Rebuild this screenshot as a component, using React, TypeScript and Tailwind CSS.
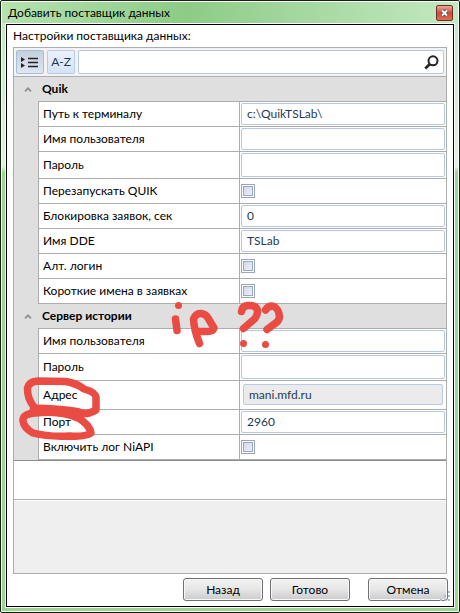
import React from "react";

type Field = {
  id: string;
  label: string;
  kind: "text" | "password" | "check" | "readonly";
  value?: string;
  height: string;
};

const quikFields: Field[] = [
  { id: "path", label: "Путь к терминалу", kind: "text", value: "c:\\QuikTSLab\\", height: "h-[25px]" },
  { id: "user", label: "Имя пользователя", kind: "text", height: "h-[25px]" },
  { id: "pass", label: "Пароль", kind: "password", height: "h-[27px]" },
  { id: "restart", label: "Перезапускать QUIK", kind: "check", height: "h-[25px]" },
  { id: "lock", label: "Блокировка заявок, сек", kind: "text", value: "0", height: "h-[25px]" },
  { id: "dde", label: "Имя DDE", kind: "text", value: "TSLab", height: "h-[25px]" },
  { id: "alt", label: "Алт. логин", kind: "check", height: "h-[25px]" },
  { id: "short", label: "Короткие имена в заявках", kind: "check", height: "h-[25px]" },
];

const historyFields: Field[] = [
  { id: "h-user", label: "Имя пользователя", kind: "text", height: "h-[25px]" },
  { id: "h-pass", label: "Пароль", kind: "password", height: "h-[27px]" },
  { id: "h-addr", label: "Адрес", kind: "readonly", value: "mani.mfd.ru", height: "h-[29px]" },
  { id: "h-port", label: "Порт", kind: "text", value: "2960", height: "h-[25px]" },
  { id: "h-log", label: "Включить лог NiAPI", kind: "check", height: "h-[25px]" },
];

function FieldRow({ field }: { field: Field }) {
  return (
    <div className={`flex border-b border-[#adadad] ${field.height}`}>
      <label htmlFor={field.id} className="flex w-[201px] shrink-0 items-center border-r border-[#adadad] pl-1 whitespace-nowrap">
        {field.label}
      </label>
      <div className="flex min-w-0 flex-1 items-stretch p-px">
        {field.kind === "check" ? (
          <input
            id={field.id}
            type="checkbox"
            className="size-[14px] appearance-none self-center border border-[#98a5bf] bg-linear-to-br from-[#c9d4e8] to-[#f4f7fc] shadow-[inset_0_0_0_1px_#ffffff,inset_0_0_0_2px_#98a5c8] checked:bg-[#4a6a9c]"
          />
        ) : field.kind === "readonly" ? (
          <input
            id={field.id}
            type="text"
            readOnly
            defaultValue={field.value}
            className="mx-0.5 mt-0.5 mb-[3px] min-w-0 flex-1 rounded-xs border border-[#b8cbe2] bg-[#ebebeb] px-[5px] text-[#1e395b]"
          />
        ) : (
          <input
            id={field.id}
            type={field.kind}
            defaultValue={field.value}
            className="min-w-0 flex-1 rounded-xs border border-[#b4c8e4] bg-white px-[5px] text-[#1e395b]"
          />
        )}
      </div>
    </div>
  );
}

function Group({ title, fields }: { title: string; fields: Field[] }) {
  return (
    <section className="bg-[#dfdfdf]">
      <h2 className="h-6 font-bold">
        <button type="button" className="flex h-full w-full items-center text-left">
          <span className="flex w-7 justify-center">
            <svg width="8" height="5" viewBox="0 0 8 5" fill="none" stroke="#909090" strokeWidth="1.8">
              <path d="M1 4.3 4 1.3 7 4.3" />
            </svg>
          </span>
          {title}
        </button>
      </h2>
      <div className="ml-6 border-t border-l border-[#adadad] bg-white">
        {fields.map((f) => (
          <FieldRow key={f.id} field={f} />
        ))}
      </div>
    </section>
  );
}

function DialogButton({ children }: { children: React.ReactNode }) {
  return (
    <button
      type="button"
      className="h-[23px] w-20 rounded-[3px] border border-[#707070] bg-linear-to-b from-[#f3f3f3] from-0% via-[#e6e6e6] via-50% to-[#cbcbcb] shadow-[inset_0_0_0_1px_#f8f8f8]"
    >
      {children}
    </button>
  );
}

function Markup() {
  return (
    <svg
      className="pointer-events-none absolute -top-px -left-px"
      width="300"
      height="450"
      viewBox="0 0 300 450"
      fill="none"
      stroke="#ea4b43"
      strokeWidth="7.5"
      strokeLinecap="round"
      strokeLinejoin="round"
      aria-hidden="true"
    >
      <path d="M175.500 319 177 330.500" />
      <path d="M199.500 343.500Q194 330 193.500 319 196 313 201 313.500 206 314 208 318L214 328Q213 331.500 207 331.500L198 331.500" />
      <path d="M241.500 311.500Q242 306 248 305.500 255 305 257 309 258.500 314 255 318.500L243.500 328.500" />
      <path d="M265.500 310Q269 305 274 306.500 279 309 279.500 317 279 321 275 323.500L267 329.500" />
      <g fill="#ea4b43" stroke="none">
        <circle cx="178.500" cy="305.500" r="3.500" />
        <circle cx="243.500" cy="343.500" r="3.500" />
        <circle cx="265.500" cy="344.500" r="3.500" />
      </g>
      <path d="M34 407Q27 398 27.500 388 29 381.500 38 381L66 381.500Q76 383 84 389 95 392 96 397L96 410Q88 415 80 413" />
      <path d="M78 418Q60 410 35 413 22 414 23 421 24 428 33 433 48 437 70 436 85 437 91 433 90 425 77 417" />
      <path d="M35 410Q58 410 78 413.500" strokeWidth="11" />
    </svg>
  );
}

export default function App() {
  return (
    <div className="relative flex min-h-screen flex-col rounded-xs border border-[#14230f] bg-white p-px font-[Lato,'Open_Sans',sans-serif] text-[12px] leading-4 text-black">
      <div className="flex flex-1 flex-col bg-linear-to-b from-[#bfe8bd] from-0% via-[#dff3dc] via-27% to-[#98d78f] to-28% px-[3px] pb-[3px]">
        <header className="-mx-[3px] flex h-[21px] items-center justify-between bg-linear-to-r from-[#b5e2b0] via-[#8dcb86] via-40% to-[#c3e9c1] pr-[5px] pl-1.5">
          <h1 className="whitespace-nowrap">Добавить поставщик данных</h1>
          <button
            type="button"
            aria-label="Закрыть"
            className="flex h-4 w-[17px] items-center justify-center rounded-xs border border-[#702d27] bg-linear-to-b from-[#eca79a] from-0% via-[#c94d3a] via-50% to-[#e06c53]"
          >
            <svg width="9" height="8" viewBox="0 0 9 8" fill="none">
              <path d="m2 1.500 5 5m0-5-5 5" stroke="#44506a" strokeWidth="3.600" />
              <path d="m2 1.500 5 5m0-5-5 5" stroke="#fff" strokeWidth="1.800" />
            </svg>
          </button>
        </header>
        <div className="flex flex-1 flex-col border border-white">
          <main className="flex flex-1 flex-col border border-black bg-white">
            <p className="px-1.5 pt-[3px] pb-[3px]">Настройки поставщика данных:</p>
            <div className="mr-1.5 ml-1.5 flex flex-1 flex-col border border-[#adadad] bg-white">
              <div className="flex h-[29px] items-stretch gap-[3px] border-b border-[#adadad] bg-[#f3f3f3] p-0.5">
                <button
                  type="button"
                  aria-label="По категориям"
                  className="flex w-7 items-center justify-center rounded-xs border border-[#a9bdd8] bg-linear-to-b from-[#c5d0df] to-[#dde6f1]"
                >
                  <svg width="18" height="13" viewBox="0 0 18 13">
                    <path d="M0 1v5l4-2.500zM0 7v5l4-2.500z" fill="#222" />
                    <path d="M7 2.500h10M7 6.500h10M7 10.500h10" stroke="#222" strokeWidth="1.300" />
                  </svg>
                </button>
                <button
                  type="button"
                  className="w-7 rounded-xs border border-[#b5cbea] bg-linear-to-b from-[#eaf1fb] to-[#d5e3f5] text-[#1e395b]"
                >
                  A-Z
                </button>
                <div className="flex min-w-0 flex-1 items-center rounded-xs border border-[#b4c8e4] bg-white pr-1">
                  <input type="text" aria-label="Поиск" className="min-w-0 flex-1 px-1 outline-none" />
                  <svg width="15" height="15" viewBox="0 0 15 15" fill="none" stroke="#252525">
                    <circle cx="9" cy="5.800" r="4.500" strokeWidth="2" />
                    <path d="M5.800 9 1.300 13.500" strokeWidth="2.600" />
                  </svg>
                </div>
              </div>
              <Group title="Quik" fields={quikFields} />
              <Group title="Сервер истории" fields={historyFields} />
              <div className="h-10 border-t border-b border-t-[#8c8c8c] border-b-[#adadad]" />
              <div className="mt-px flex-1 bg-[#efefef]" />
            </div>
            <footer className="flex justify-end pt-1 pr-[5px] pb-[5px]">
              <div className="mr-[18px] flex gap-[7px]">
                <DialogButton>Назад</DialogButton>
                <DialogButton>Готово</DialogButton>
              </div>
              <DialogButton>Отмена</DialogButton>
            </footer>
          </main>
        </div>
      </div>
      <svg className="pointer-events-none absolute right-2 bottom-2.5" width="12" height="12" viewBox="0 0 12 12" fill="#a9b6d4" aria-hidden="true">
        <path d="M9 1h2v2H9zM9 5h2v2H9zM9 9h2v2H9zM5 5h2v2H5zM5 9h2v2H5zM1 9h2v2H1z" />
      </svg>
      <Markup />
    </div>
  );
}
